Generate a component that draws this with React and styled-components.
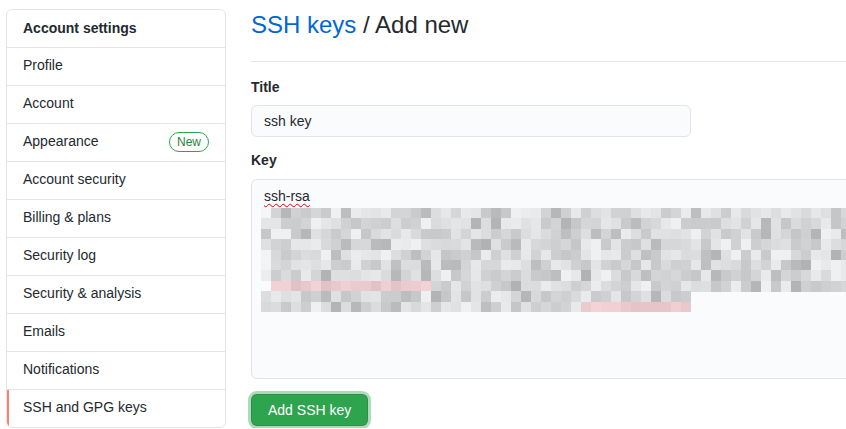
import React from "react";
import styled, {createGlobalStyle} from "styled-components";

const GlobalStyle = createGlobalStyle`
    html, body {
        margin: 0;
        padding: 0;
        overflow: hidden;
        background: #ffffff;
    }

    body {
        font-family: "Liberation Sans", Arial, sans-serif;
        font-size: 14px;
        color: #24292e;
    }
`;

const Page = styled.div`
    display: flex;
    align-items: flex-start;
    gap: 25px;
    padding-left: 6px;
    width: 1000px;
`;

const Menu = styled.nav`
    box-sizing: border-box;
    flex: 0 0 220px;
    margin-top: 9px;
    border: 1px solid #e1e4e8;
    border-radius: 6px;
    background: #ffffff;
    overflow: hidden;
`;

const MenuHeading = styled.div`
    padding: 8px 16px 8px;
    line-height: 21px;
    font-weight: bold;
`;

const MenuItem = styled.div`
    display: flex;
    align-items: center;
    justify-content: space-between;
    padding: 7px 16px 9px;
    line-height: 21px;
    border-top: 1px solid #e1e4e8;
    box-shadow: ${props => props.$selected ? "inset 2px 0 0 #f9826c" : "none"};
`;

const Badge = styled.span`
    display: inline-block;
    padding: 0 7px;
    font-size: 12px;
    line-height: 18px;
    color: #22863a;
    border: 1px solid #28a745;
    border-radius: 2em;
`;

const Main = styled.main`
    flex: 0 0 660px;
`;

const Subhead = styled.div`
    padding: 7px 0 18px;
    border-bottom: 1px solid #e1e4e8;
`;

const Heading = styled.h2`
    margin: 0;
    font-size: 24px;
    font-weight: normal;
    line-height: 36px;

    a {
        color: #0366d6;
        text-decoration: none;
    }
`;

const FormGroup = styled.div`
    margin-top: ${props => props.$first ? "15px" : "13px"};
`;

const Label = styled.label`
    display: block;
    font-weight: bold;
    line-height: 20px;
    margin-bottom: ${props => props.$gap || "8px"};
`;

const Input = styled.input`
    box-sizing: border-box;
    display: block;
    width: 440px;
    height: 32px;
    padding: 5px 12px;
    font: inherit;
    font-size: 14px;
    color: #24292e;
    background: #fafbfc;
    border: 1px solid #e1e4e8;
    border-radius: 6px;
    outline: none;
`;

const KeyArea = styled.div`
    box-sizing: border-box;
    height: 200px;
    padding: 6px 12px;
    background: #fafbfc;
    border: 1px solid #e1e4e8;
    border-radius: 6px;
    overflow: hidden;
`;

const KeyText = styled.div`
    line-height: 20px;

    span {
        text-decoration: underline wavy #e00000;
        text-decoration-thickness: 1px;
        text-underline-offset: 2px;
        text-decoration-skip-ink: none;
    }
`;

const MosaicBox = styled.div`
    margin: 2px 0 0 -3px;
    width: 620px;
    height: 104px;
`;

const SubmitButton = styled.button`
    margin: 15px 0 0 0;
    padding: 5px 16px;
    font: inherit;
    font-size: 14px;
    line-height: 20px;
    color: #ffffff;
    background: #2ea44f;
    border: 1px solid rgba(27, 31, 35, 0.15);
    border-radius: 6px;
    box-shadow: 0 0 0 3px rgba(46, 164, 79, 0.4);
    cursor: pointer;
`;

const menuItems = [
    "Profile",
    "Account",
    "Appearance",
    "Account security",
    "Billing & plans",
    "Security log",
    "Security & analysis",
    "Emails",
    "Notifications",
    "SSH and GPG keys",
];

// pixelated (blurred out) key text
const Mosaic = () => {
    let seed = 1234567;
    const rand = () => {
        seed = (seed * 1103515245 + 12345) % 2147483648;
        return seed / 2147483648;
    };

    const cols = 62;
    const rows = 10;
    const rowH = 10.4;
    const cells = [];

    for (let r = 0; r < rows; r++) {
        const rowEnd = r >= 8 ? 43 : cols;
        for (let c = 0; c < rowEnd; c++) {
            let v = Math.round(196 + rand() * 38);
            if (rand() > 0.9) v = Math.round(176 + rand() * 14);
            if (rand() > 0.95) v = 238;
            let fill = `rgb(${v},${v + 2},${v + 4})`;
            if (c === 0) fill = `rgb(${v + 12},${v + 13},${v + 14})`;
            const pinkA = r === 7 && c >= 1 && c < 17;
            const pinkB = r === 9 && c >= 32 && c < 43;
            if (pinkA || pinkB) {
                const p = Math.round(203 + rand() * 18);
                fill = `rgb(${p + 22},${p - 10},${p - 8})`;
            }
            cells.push(
                <rect key={`${r}-${c}`} x={c * 10} y={r * rowH} width={10} height={rowH + 0.5} fill={fill}/>
            );
        }
    }

    return (
        <svg width="620" height="104" viewBox="0 0 620 104" shapeRendering="crispEdges">
            {cells}
        </svg>
    );
};

export default function App() {
    return (
        <>
            <GlobalStyle/>
            <Page>
                <Menu>
                    <MenuHeading>Account settings</MenuHeading>
                    {menuItems.map(item => (
                        <MenuItem key={item} $selected={item === "SSH and GPG keys"}>
                            <span>{item}</span>
                            {item === "Appearance" && <Badge>New</Badge>}
                        </MenuItem>
                    ))}
                </Menu>
                <Main>
                    <Subhead>
                        <Heading><a href="#keys">SSH keys</a> / Add new</Heading>
                    </Subhead>
                    <FormGroup $first>
                        <Label htmlFor="title">Title</Label>
                        <Input id="title" defaultValue="ssh key"/>
                    </FormGroup>
                    <FormGroup>
                        <Label $gap="9px">Key</Label>
                        <KeyArea>
                            <KeyText><span>ssh-rsa</span></KeyText>
                            <MosaicBox>
                                <Mosaic/>
                            </MosaicBox>
                        </KeyArea>
                    </FormGroup>
                    <SubmitButton>Add SSH key</SubmitButton>
                </Main>
            </Page>
        </>
    );
}
